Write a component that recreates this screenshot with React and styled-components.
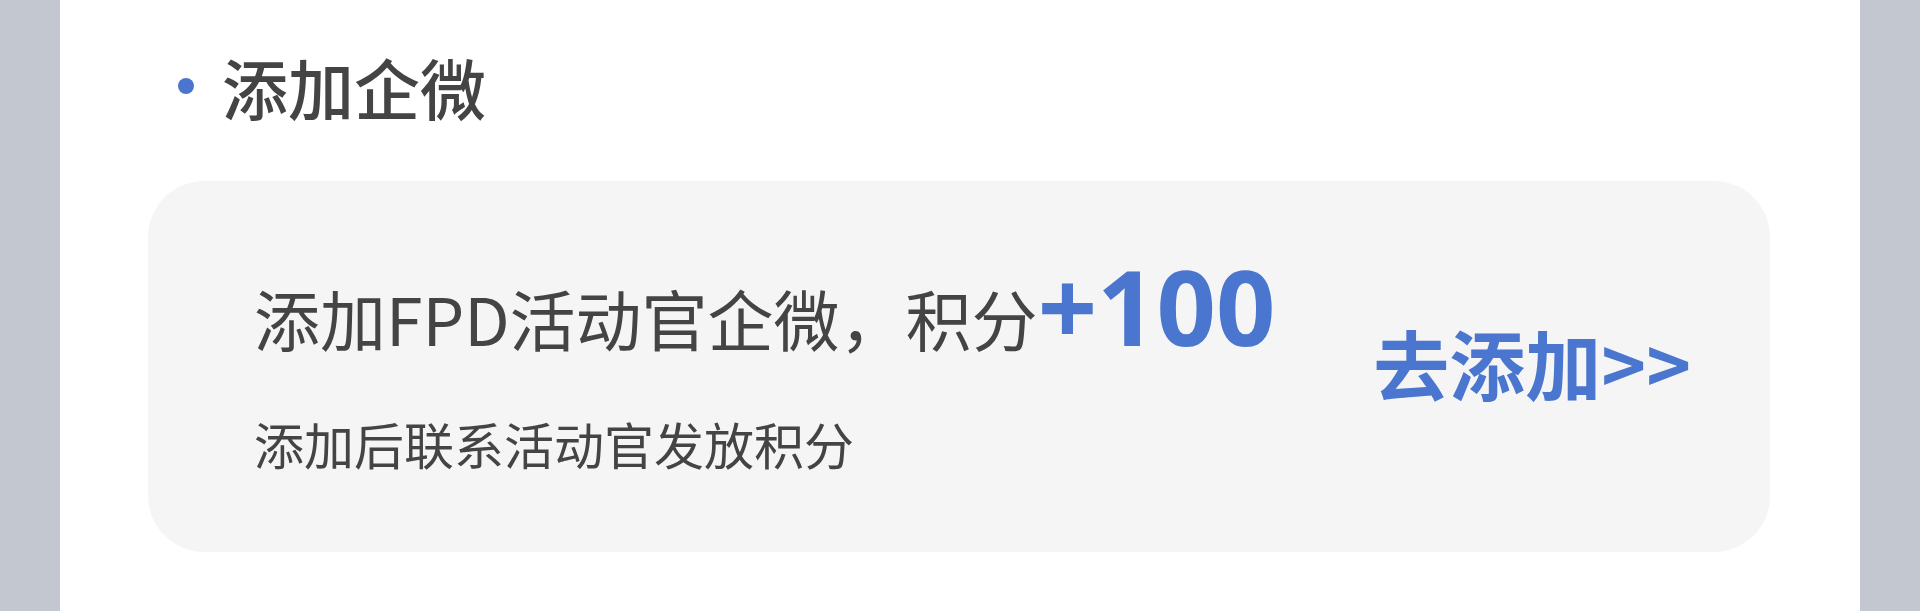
import React from "react";
import styled, { createGlobalStyle } from "styled-components";

const Global = createGlobalStyle`
  html, body { margin: 0; padding: 0; }
  body {
    background: #c3c7d0;
    font-family: "Noto Sans CJK SC", "Noto Sans", sans-serif;
  }
`;

const Panel = styled.div`
  width: 1800px;
  height: 611px;
  margin: 0 auto;
  background: #ffffff;
  box-sizing: border-box;
  padding: 0 90px 0 88px;
  overflow: hidden;
`;

const Header = styled.div`
  height: 172px;
  display: flex;
  align-items: center;
  padding-left: 30px;
  gap: 28px;
`;

const Dot = styled.span`
  width: 16px;
  height: 16px;
  border-radius: 50%;
  background: #4a76cf;
  flex: none;
`;

const Title = styled.h2`
  margin: 0;
  font-size: 66px;
  font-weight: 500;
  line-height: 1;
  color: #444444;
`;

const Card = styled.div`
  margin-top: 9px;
  height: 371px;
  border-radius: 56px;
  background: #f5f5f5;
  box-sizing: border-box;
  padding: 0 79px 0 106px;
  display: flex;
  align-items: center;
  justify-content: space-between;
`;

const Info = styled.div`
  display: flex;
  flex-direction: column;
  margin-bottom: 12px;
`;

const MainLine = styled.div`
  font-size: 66px;
  line-height: 1;
  color: #444444;
  white-space: nowrap;
`;

const Points = styled.span`
  font-family: "Noto Sans", "Noto Sans CJK SC", sans-serif;
  font-size: 104px;
  font-weight: 700;
  color: #4a76cf;
`;

const SubLine = styled.div`
  margin-top: 60px;
  font-size: 50px;
  line-height: 1;
  color: #444444;
`;

const Action = styled.a`
  margin-bottom: 10px;
  font-size: 76px;
  font-weight: 700;
  color: #4a76cf;
  text-decoration: none;
  line-height: 1;
  white-space: nowrap;
  cursor: pointer;
`;

export default function App() {
  return (
    <>
      <Global />
      <Panel>
        <Header>
          <Dot />
          <Title>添加企微</Title>
        </Header>
        <Card>
          <Info>
            <MainLine>
              添加FPD活动官企微，积分<Points>+100</Points>
            </MainLine>
            <SubLine>添加后联系活动官发放积分</SubLine>
          </Info>
          <Action>去添加&gt;&gt;</Action>
        </Card>
      </Panel>
    </>
  );
}
